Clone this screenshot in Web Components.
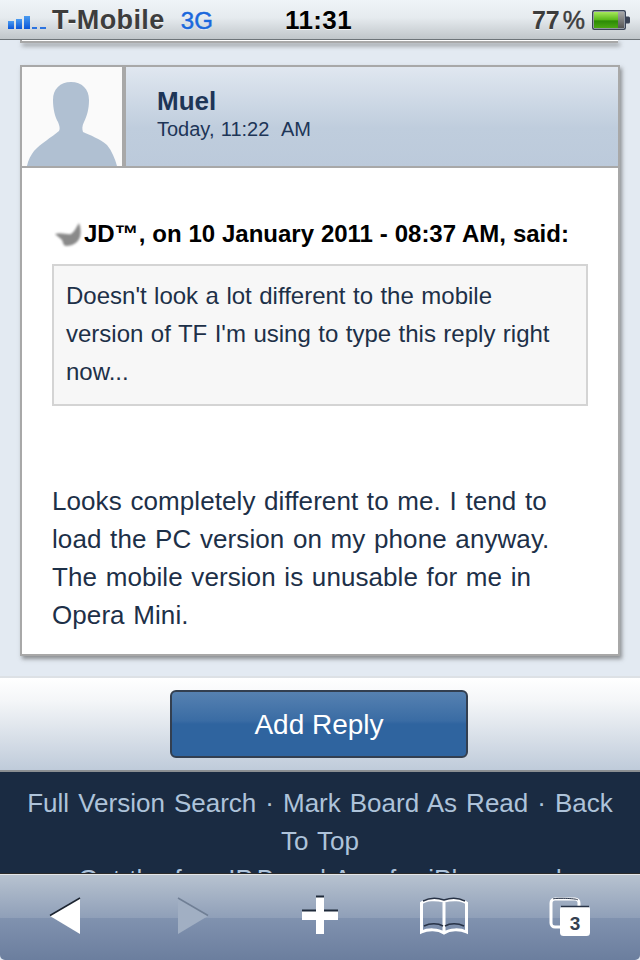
<!DOCTYPE html>
<html>
<head>
<meta charset="utf-8">
<title>Post</title>
<style>
  html, body { margin: 0; padding: 0; background: #000; }
  body { font-family: "Liberation Sans", Arial, sans-serif; }
</style>
</head>
<body>
<phone-screen>
  <status-bar slot="top"></status-bar>
  <prev-post-edge></prev-post-edge>
  <forum-post name="Muel" date="Today, 11:22&nbsp; AM">
    <post-quote cite="JD™, on 10 January 2011 - 08:37 AM, said:">Doesn't look a lot different to the mobile version of TF I'm using to type this reply right now...</post-quote>
    Looks completely different to me. I tend to load the PC version on my phone anyway. The mobile version is unusable for me in Opera Mini.
  </forum-post>
  <reply-bar label="Add Reply"></reply-bar>
  <board-footer></board-footer>
  <safari-toolbar slot="bottom"></safari-toolbar>
</phone-screen>

<script>
/* Fixed 640x960 frame: status bar, clipped page, toolbar. */
class PhoneScreen extends HTMLElement {
  constructor() {
    super();
    this.attachShadow({ mode: 'open' }).innerHTML = `
      <style>
        :host { display: flex; flex-direction: column; width: 640px; height: 960px; overflow: hidden; background: #e3eaf2; }
        .page { flex: 1 1 0; min-height: 0; overflow: hidden; display: flex; flex-direction: column; }
      </style>
      <slot name="top"></slot>
      <div class="page"><slot></slot></div>
      <slot name="bottom"></slot>`;
  }
}

class StatusBar extends HTMLElement {
  constructor() {
    super();
    this.attachShadow({ mode: 'open' }).innerHTML = `
      <style>
        :host {
          display: flex; align-items: center; flex: none; box-sizing: border-box; height: 40px; padding: 2px 9px 0 8px;
          position: relative;
          background: linear-gradient(#eff4f8, #e6ebef 45%, #c0c6ca);
          border-bottom: 1px solid #6d7479;
          font: bold 27px "Liberation Sans", sans-serif; color: #3d3d3d;
          text-shadow: 0 1px 0 rgba(255,255,255,.75);
        }
        .bars { display: block; margin-right: 6px; margin-top: 3px; }
        .carrier { letter-spacing: .4px; }
        .net { margin-left: 16px; color: #1b68dc; font-size: 24px; font-weight: normal; -webkit-text-stroke: .5px #1b68dc; letter-spacing: .3px; }
        .time { position: absolute; left: 285px; color: #000; font-size: 26px; letter-spacing: .4px; }
        .batt-wrap { margin-left: auto; display: flex; align-items: center; gap: 7px; }
        .pct { font-size: 25px; }
        .pct span { margin-left: 3px; font-weight: normal; -webkit-text-stroke: .5px #3d3d3d; }
        .batt-wrap svg { margin-top: -2px; }
      </style>
      <svg class="bars" width="38" height="13" viewBox="0 0 38 13" aria-hidden="true">
        <defs><linearGradient id="b" x1="0" y1="0" x2="0" y2="1"><stop offset="0" stop-color="#4a9bf0"/><stop offset="1" stop-color="#0a55d8"/></linearGradient></defs>
        <rect x="0" y="5" width="6" height="8" fill="url(#b)"/>
        <rect x="8" y="3" width="6" height="10" fill="url(#b)"/>
        <rect x="16" y="0" width="6" height="13" fill="url(#b)"/>
        <rect x="24" y="11" width="5" height="2" fill="#2c74e0"/>
        <rect x="32" y="11" width="6" height="2" fill="#2c74e0"/>
      </svg>
      <span class="carrier">T-Mobile</span>
      <span class="net">3G</span>
      <span class="time">11:31</span>
      <div class="batt-wrap">
        <span class="pct">77<span>%</span></span>
        <svg width="39" height="20" viewBox="0 0 39 20" aria-hidden="true">
          <defs>
            <linearGradient id="g" x1="0" y1="0" x2="0" y2="1"><stop offset="0" stop-color="#a6e85a"/><stop offset=".5" stop-color="#58b818"/><stop offset=".55" stop-color="#2c8a06"/><stop offset="1" stop-color="#4aa812"/></linearGradient>
            <linearGradient id="k" x1="0" y1="0" x2="0" y2="1"><stop offset="0" stop-color="#a8a8a8"/><stop offset="1" stop-color="#555"/></linearGradient>
          </defs>
          <rect x=".75" y=".75" width="32.5" height="18.5" rx="1.5" fill="#e8ecee" stroke="#3b4456" stroke-width="1.5"/>
          <rect x="2" y="2" width="24" height="16" fill="url(#g)"/>
          <rect x="26" y="2" width="6" height="16" fill="url(#k)"/>
          <path d="M34 6.5h2.5a1.5 1.5 0 0 1 1.5 1.5v4a1.5 1.5 0 0 1-1.5 1.5H34z" fill="#3b4456"/>
        </svg>
      </div>`;
  }
}

/* Tail end of the post above, just under the status bar. */
class PrevPostEdge extends HTMLElement {
  constructor() {
    super();
    this.attachShadow({ mode: 'open' }).innerHTML = `
      <style>
        :host {
          display: block; flex: none; box-sizing: border-box; height: 3px; margin: 0 22px 22px 20px;
          background: #fff; border-left: 2px solid #a8a8a8; border-bottom: 2px solid #a8a8a8;
          box-shadow: 2px 3px 4px rgba(70,70,70,.55);
        }
      </style>`;
  }
}

class ForumPost extends HTMLElement {
  constructor() {
    super();
    const name = this.getAttribute('name');
    const date = this.getAttribute('date');
    this.attachShadow({ mode: 'open' }).innerHTML = `
      <style>
        :host {
          display: block; flex: none; box-sizing: border-box; margin: 0 20px; background: #fff;
          border: 2px solid #a8a8a8; box-shadow: 2px 3px 4px rgba(70,70,70,.55);
        }
        .head { display: flex; height: 99px; border-bottom: 2px solid #a8a8a8; box-sizing: content-box; }
        .avatar { flex: none; width: 100px; background: #fafafa; border-right: 4px solid #a8a8a8; }
        .avatar svg { display: block; }
        .meta {
          flex: 1; padding: 19px 0 0 31px; box-sizing: border-box;
          background: linear-gradient(#e0e7f0, #bfcddd 62%, #bccadb); color: #1d3557;
        }
        .name { font: bold 26px/30px "Liberation Sans", sans-serif; }
        .date { font: 20px/26px "Liberation Sans", sans-serif; word-spacing: .8px; }
        .body {
          box-sizing: border-box; height: 486px; padding: 47px 30px 0;
          font: 26px/38px "Liberation Sans", sans-serif; color: #1d3048; word-spacing: 1.3px; letter-spacing: .08px;
        }
      </style>
      <div class="head">
        <div class="avatar">
          <svg width="100" height="99" viewBox="0 0 100 99" aria-hidden="true">
            <path fill="#b0c0d2" d="M49 15C38 15 31 22 31 33C31 42 33 50 36 55C38 60 38 62 37 64C30 70 18 77 12 84C9 88 6 93 5 99H95C93 92 90 84 85 78C78 72 68 68 61 65C60 62 60 59 62 55C65 49 67 42 67 33C67 22 60 15 49 15Z"/>
          </svg>
        </div>
        <div class="meta">
          <div class="name">${name}</div>
          <div class="date">${date}</div>
        </div>
      </div>
      <div class="body"><slot></slot></div>`;
  }
}

class PostQuote extends HTMLElement {
  constructor() {
    super();
    const cite = this.getAttribute('cite');
    this.attachShadow({ mode: 'open' }).innerHTML = `
      <style>
        :host { display: block; margin-bottom: 76px; font-size: 24px; word-spacing: .8px; letter-spacing: 0; }
        .cite {
          display: flex; align-items: center; height: 38px; margin-bottom: 11px;
          font: bold 24px/38px "Liberation Sans", sans-serif; color: #000; white-space: nowrap; word-spacing: .2px;
        }
        .cite svg { flex: none; margin-left: 2px; margin-right: 1px; }
        .box {
          box-sizing: border-box; height: 142px; padding: 11px 30px 0 12px;
          background: #f7f7f7; border: 2px solid #d4d4d4;
        }
      </style>
      <div class="cite">
        <svg width="29" height="28" viewBox="0 0 29 28" aria-hidden="true">
          <defs><filter id="s" x="-20%" y="-20%" width="140%" height="140%"><feGaussianBlur stdDeviation=".8"/></filter></defs>
          <path filter="url(#s)" fill="#8a8a8a" d="M1 14C7 12 13 15 17 14C20 12 22 8 25 3C27 8 27 13 26 17C24 23 18 26 12 26C10 26 9 23 8 20C6 18 3 16 1 14Z"/>
        </svg>
        <span>${cite}</span>
      </div>
      <div class="box"><slot></slot></div>`;
  }
}

class ReplyBar extends HTMLElement {
  constructor() {
    super();
    const label = this.getAttribute('label');
    this.attachShadow({ mode: 'open' }).innerHTML = `
      <style>
        :host {
          display: flex; justify-content: center; align-items: flex-start; flex: none; box-sizing: border-box;
          height: 96px; margin-top: 20px; padding-top: 12px;
          background: linear-gradient(#fff, #f4f6f8 25%, #bfcbda);
          border-top: 2px solid #dde1e5; border-bottom: 2px solid #8b8f92;
        }
        button {
          width: 298px; height: 68px; box-sizing: border-box; padding: 2px 0 0; margin-left: -2px;
          border: 2px solid #333f50; border-radius: 6px;
          background: linear-gradient(#5681b1, #3a6ca4 45%, #2f649f 50%, #2f649f);
          font: 28px "Liberation Sans", sans-serif; color: #fff;
        }
      </style>
      <button type="button">${label}</button>`;
  }
}

class BoardFooter extends HTMLElement {
  constructor() {
    super();
    this.attachShadow({ mode: 'open' }).innerHTML = `
      <style>
        :host {
          display: block; flex: 1 1 0; min-height: 0; overflow: hidden; padding: 12px 20px 0;
          background: #1a2b42; color: #aec3da; text-align: center;
          font: 26px/38px "Liberation Sans", sans-serif; word-spacing: 1.8px;
        }
      </style>
      <div>Full Version Search · Mark Board As Read · Back To Top</div>
      <div>Get the free IP.Board App for iPhone and</div>`;
  }
}

class SafariToolbar extends HTMLElement {
  constructor() {
    super();
    this.attachShadow({ mode: 'open' }).innerHTML = `
      <style>
        :host {
          display: block; flex: none; height: 87px;
          background: linear-gradient(#2b2b2b 0 1px, #e4e6e8 1px 2px, transparent 2px),
                      linear-gradient(#b9c4d1, #8f9fb8 52%, #8092af 52%, #6b7e9e);
          border-bottom-left-radius: 5px; border-bottom-right-radius: 5px;
        }
        svg { display: block; }
        text { font: bold 19px "Liberation Sans", sans-serif; fill: #35404f; }
      </style>
      <svg width="640" height="87" viewBox="0 873 640 87" role="img">
        <!-- back -->
        <path d="M80 898V934L50 916Z" fill="#fff"/>
        <path d="M50 915.5L80 898" stroke="#1c2430" stroke-width="1.5" fill="none"/>
        <!-- forward -->
        <path d="M178 898V934L208 916Z" fill="#a1afc3"/>
        <path d="M178 898L208 915.5" stroke="#707f95" stroke-width="1.5" fill="none"/>
        <!-- add -->
        <path d="M316 896h8v14h14v10h-14v14h-8v-14h-14v-10h14z" fill="#fff"/>
        <path d="M302 910.5h14M324 910.5h14M316 896.5h8" stroke="#1f2a3a" stroke-width="2" fill="none"/>
        <!-- bookmarks -->
        <path d="M444 901C436 899 426 899 421.5 903V932C428 929 438 929 444 933C450 929 460 929 466.5 932V903C462 899 452 899 444 901ZM444 901V933" fill="none" stroke="#fff" stroke-width="3"/>
        <path d="M423 901C430 897.5 438 898 444 900C450 898 458 897.5 465 901" fill="none" stroke="#273246" stroke-width="1.5"/>
        <path d="M424 926C430 923 438 923 443 926M445 926C450 923 458 923 464 926" fill="none" stroke="#273246" stroke-width="1.5"/>
        <!-- tabs -->
        <path d="M561 927H555a4 4 0 0 1-4-4V903a4 4 0 0 1 4-4H575a4 4 0 0 1 4 4V906" fill="none" stroke="#fff" stroke-width="3"/>
        <path d="M553 899C553 898 576 898 578 900" fill="none" stroke="#273246" stroke-width="1"/>
        <rect x="560" y="906" width="30" height="30" rx="3.5" fill="#fff"/>
        <path d="M561 906.5H589" stroke="#273246" stroke-width="1.5"/>
        <text x="575" y="930" text-anchor="middle">3</text>
      </svg>`;
  }
}

customElements.define('phone-screen', PhoneScreen);
customElements.define('status-bar', StatusBar);
customElements.define('prev-post-edge', PrevPostEdge);
customElements.define('forum-post', ForumPost);
customElements.define('post-quote', PostQuote);
customElements.define('reply-bar', ReplyBar);
customElements.define('board-footer', BoardFooter);
customElements.define('safari-toolbar', SafariToolbar);
</script>
</body>
</html>
